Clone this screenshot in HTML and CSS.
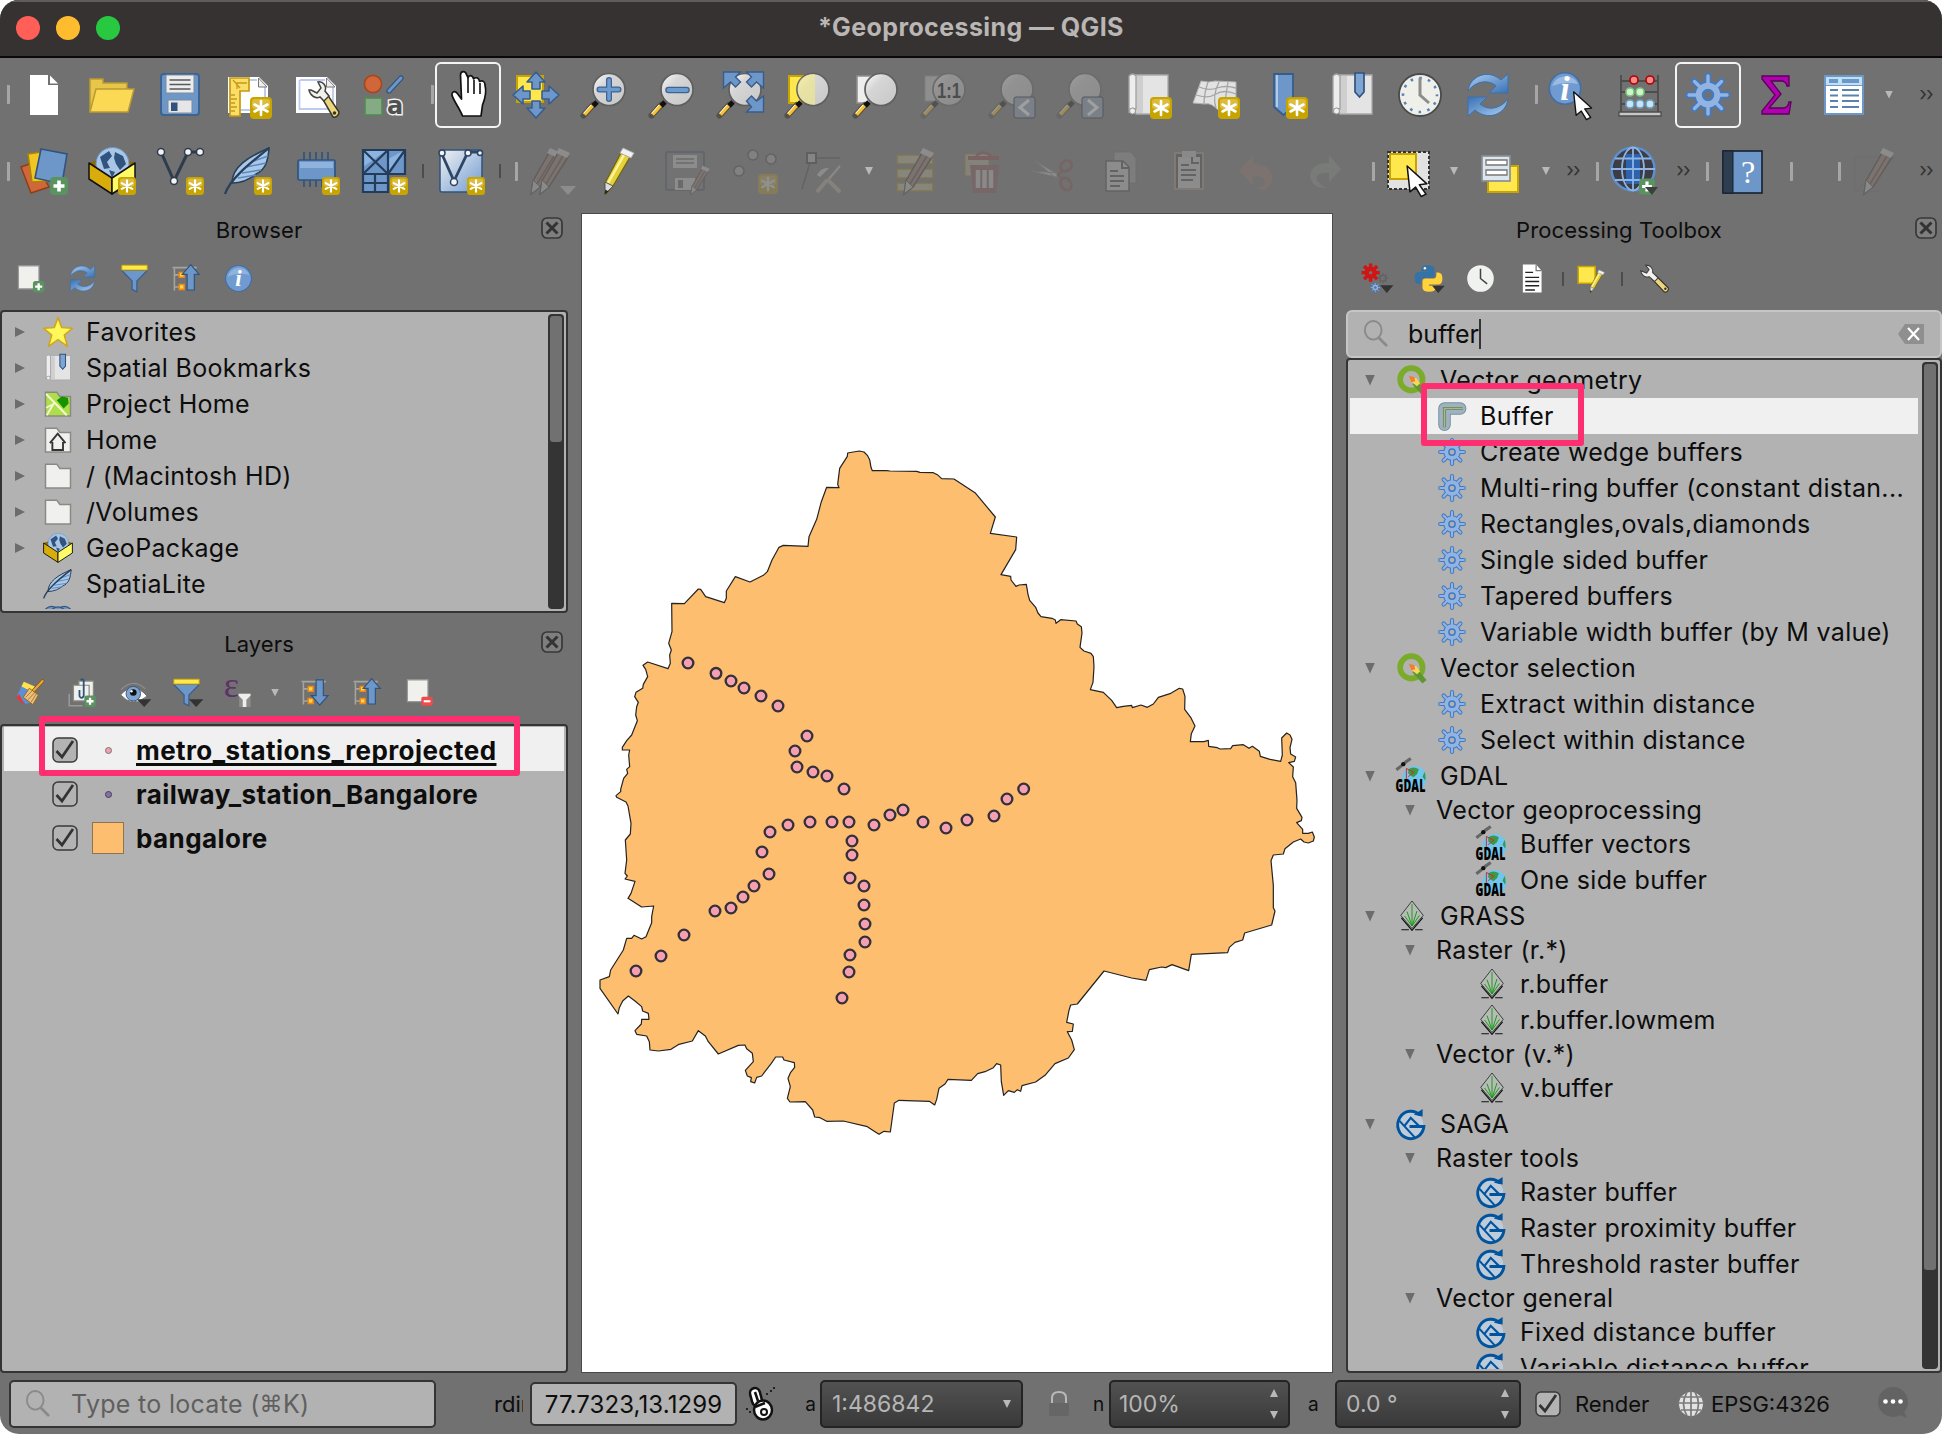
FILE: index.html
```html
<!DOCTYPE html>
<html lang="en">
<head>
<meta charset="utf-8">
<title>*Geoprocessing — QGIS</title>
<link rel="stylesheet" href="styles.css">
</head>
<body>
<svg class="defs" width="0" height="0" aria-hidden="true">
<defs>
  <linearGradient id="lens" x1="0" y1="0" x2="1" y2="1"><stop offset="0" stop-color="#fff"/><stop offset=".35" stop-color="#d6d6d6"/><stop offset="1" stop-color="#c6c6c6"/></linearGradient>
  <linearGradient id="blueg" x1="0" y1="0" x2="1" y2="1"><stop offset="0" stop-color="#a9cdf2"/><stop offset="1" stop-color="#3a72b4"/></linearGradient>
  <linearGradient id="paleg" x1="0" y1="0" x2="1" y2="1"><stop offset="0" stop-color="#f2f2f2"/><stop offset="1" stop-color="#6f9bd0"/></linearGradient>

  <symbol id="badge" viewBox="0 0 22 22"><rect width="22" height="22" rx="4" fill="#c8a400"/><rect x="2" y="2" width="18" height="10" rx="3" fill="#dcbc3c"/><path d="M11 4v14M4.500 7.500l13 7M4.500 14.500l13-7" stroke="#fff" stroke-width="2.600" stroke-linecap="round"/></symbol>
  <symbol id="plus" viewBox="0 0 18 18"><rect width="18" height="18" rx="4" fill="#5a9360"/><path d="M9 3.500v11M3.500 9h11" stroke="#fff" stroke-width="3.600"/></symbol>
  <symbol id="new" viewBox="0 0 48 48"><path d="M10 4h18v10h10v30H10z" fill="#fff"/><path d="M30 4.500l8 8h-8z" fill="#fff"/></symbol>
  <symbol id="open" viewBox="0 0 48 48"><path d="M2 41V8h13v4h24v8" fill="#e8c64a" stroke="#b99b33" stroke-width="1.500"/><path d="M2 41l6-23h38l-6 23z" fill="#fbd954" stroke="#b99b33" stroke-width="1.500"/></symbol>
  <symbol id="save" viewBox="0 0 48 48"><rect x="5" y="3" width="38" height="41" rx="3" fill="#6c97c8" stroke="#3d6391" stroke-width="2"/><path d="M10 4h28v18H10z" fill="#ececec" stroke="#7c8b9c"/><path d="M13.500 9h21M13.500 13.500h21M13.500 18h21" stroke="#55585e" stroke-width="1.600"/><path d="M12 29h24v13H12z" fill="#e6e6e6" stroke="#7c8b9c"/><path d="M15 31.500h6.500v8.500H15z" fill="#31547e"/></symbol>
  <symbol id="layout" viewBox="0 0 48 48"><path d="M4 6h31l9 9v27H4z" fill="#fff"/><path d="M8 9h25M41 16v23H16" fill="none" stroke="#bccbf0" stroke-width="2"/><path d="M34.500 7v9h8.500z" fill="#eee" stroke="#777"/><path d="M6 7h19v13H16v25H6z" fill="#fbdd6b" stroke="#c79a10" stroke-width="1.700"/><path d="M7 24h4M7 28h6M7 32h4M7 36h6M7 40h4M9 9l7 8M13 18v-6h10" stroke="#c79a10" stroke-width="1.300" fill="none"/><use href="#badge" x="26" y="26" width="22" height="22"/></symbol>
  <symbol id="wrench" viewBox="0 0 48 48"><path d="M30 27l5-4L47 41c0 4-4 6-6 5z" fill="#ecd67b" stroke="#37342a" stroke-width="1.500"/><circle cx="42.500" cy="42" r="1.800" fill="#37342a"/><path d="M17 19c1 6 7 9 11 7l4 4 5-5-4-5c2-5-2-10-7-9l3 6-4 5-6-3z" fill="#f1f1ee" stroke="#43423e" stroke-width="1.500"/></symbol>
  <symbol id="manager" viewBox="0 0 48 48"><path d="M4 6h31l9 9v27H4z" fill="#fff"/><path d="M8 9h25M41 16v22H7.500V9" fill="none" stroke="#bccbf0" stroke-width="1.800"/><path d="M34.500 7v9h8.500z" fill="#eee" stroke="#777"/><use href="#wrench"/></symbol>
  <symbol id="style" viewBox="0 0 48 48"><circle cx="13" cy="13" r="8.600" fill="#d0673a" stroke="#a8461c" stroke-width="1.600"/><path d="M29 20L41 7" stroke="#31547e" stroke-width="5.400" stroke-linecap="round"/><path d="M29 20L41 7" stroke="#6c97c8" stroke-width="3" stroke-linecap="round"/><rect x="5" y="27" width="17" height="17" fill="#84ab84" stroke="#548a54" stroke-width="1.600"/><text x="35" y="43" text-anchor="middle" font-family="DejaVu Sans" font-weight="bold" font-size="24" fill="#505050" stroke="#efefef" stroke-width="3" paint-order="stroke">a</text></symbol>
  <symbol id="hand" viewBox="0 0 48 48"><path d="M18.500 45C16 38 9 29 8 24c-.4-3 2-4.500 5-2l4.500 6-1-24c0-4.500 5-4.500 6-.5l1.500 3c2-3 5-2 5.500 1.500 3-2.500 5.500-1 6 2.500 3-1.500 5.500 0 5.500 3.500 2 8 0 14-2.500 20L37 45z" fill="#fff" stroke="#111" stroke-width="1.700" stroke-linejoin="round"/><path d="M24 6v16M30 9v14M36 12v11" stroke="#111" stroke-width="1.600"/></symbol>
  <symbol id="pan" viewBox="0 0 48 48"><rect x="5" y="5" width="26" height="26" fill="#ffe84e" stroke="#c9a400" stroke-width="2"/><g fill="#6c97c8" stroke="#385d8c" stroke-width="1.600" stroke-linejoin="round"><path d="M24 1l9 10h-5v7h-8v-7h-5z"/><path d="M24 47l9-10h-5v-7h-8v7h-5z"/><path d="M1 24l10-9v5h7v8h-7v5z"/><path d="M47 24l-10-9v5h-7v8h7v5z"/></g></symbol>
  <symbol id="lensbase" viewBox="0 0 48 48"><path d="M3.500 44.500L13 34" stroke="#55504a" stroke-width="6" stroke-linecap="round"/><path d="M4.500 43.500L13 34" stroke="#f9c22f" stroke-width="3.600"/><path d="M3.500 42.500L11 34" stroke="#fff" stroke-width="1"/><path d="M13 35l4-4" stroke="#111" stroke-width="5"/><circle cx="29" cy="18.500" r="16" fill="url(#lens)" stroke="#5f5f5f" stroke-width="1.700"/></symbol>
  <symbol id="zin" viewBox="0 0 48 48"><use href="#lensbase"/><path d="M29 9v19M19.500 18.500h19" stroke="#3d6391" stroke-width="6" stroke-linecap="round"/><path d="M29 9v19M19.500 18.500h19" stroke="#6c9bd0" stroke-width="3.500" stroke-linecap="round"/></symbol>
  <symbol id="zout" viewBox="0 0 48 48"><use href="#lensbase"/><path d="M20.500 19h18" stroke="#3d6391" stroke-width="6.500" stroke-linecap="round"/><path d="M20.500 19h18" stroke="#6c9bd0" stroke-width="4" stroke-linecap="round"/></symbol>
  <symbol id="zfull" viewBox="0 0 48 48"><use href="#lensbase"/><g fill="#6c97c8" stroke="#385d8c" stroke-width="1.400"><path d="M7.500 1h17l-5 5 5 5-5 5-5-5-7 6z"/><path d="M47.500 1h-17l5 5-5 5 5 5 5-5 7 6z"/><path d="M47.500 41h-17l5-5-5-6 5-5 5 5 7-5z"/></g></symbol>
  <symbol id="zsel" viewBox="0 0 48 48"><rect x="5" y="5" width="24" height="27" fill="#ffe84e" stroke="#c9a400" stroke-width="2"/><use href="#lensbase"/><path d="M17 8a16 16 0 0 0 0 20q5 5 14 6V3Q22 3 17 8z" fill="#f2e88a" opacity=".65"/></symbol>
  <symbol id="zlay" viewBox="0 0 48 48"><rect x="5" y="5" width="24" height="27" fill="#eee" stroke="#8e8e8a" stroke-width="1.500"/><use href="#lensbase"/></symbol>
  <symbol id="znat" viewBox="0 0 48 48"><rect x="5" y="5" width="24" height="25" fill="#ccc" stroke="#999"/><use href="#lensbase"/><text x="29" y="27" text-anchor="middle" font-family="Liberation Sans" font-weight="bold" font-size="22" textLength="24" lengthAdjust="spacingAndGlyphs" fill="#000">1:1</text></symbol>
  <symbol id="zlast" viewBox="0 0 48 48"><use href="#lensbase"/><rect x="26" y="26" width="21" height="21" rx="2" fill="#8da0b5" stroke="#223"/><path d="M41 29l-9 7.500 9 7.500" fill="none" stroke="#fff" stroke-width="3"/></symbol>
  <symbol id="znext" viewBox="0 0 48 48"><use href="#lensbase"/><rect x="26" y="26" width="21" height="21" rx="2" fill="#8da0b5" stroke="#223"/><path d="M32 29l9 7.500-9 7.500" fill="none" stroke="#fff" stroke-width="3"/></symbol>
  <symbol id="scroll" viewBox="0 0 48 48"><path d="M10 4h34v39H12z" fill="#e4e4e4" stroke="#a9a9a9" stroke-width="1.300"/><path d="M12 5h7v37h-7z" fill="#cfcfcf"/><path d="M5 5q3.500-4 7 0v33q-7-2-7 4z" fill="#ededed" stroke="#a0a0a0" stroke-width="1.300"/><circle cx="8.500" cy="40" r="3" fill="#eee" stroke="#999"/></symbol>
  <symbol id="newmap" viewBox="0 0 48 48"><use href="#scroll"/><use href="#badge" x="26" y="26" width="22" height="22"/></symbol>
  <symbol id="new3d" viewBox="0 0 48 48"><path d="M1 32L9 10q8 2 14 0l21 1v25q-10-2-17 4-8-9-14-7z" fill="#e2e2e2" stroke="#b0b0b0"/><path d="M4 24q12 4 20-1t20 0M7 16q10 4 18 1t19 0M16 11q-4 12-4 22M27 11q-7 14-3 26M36 11q-2 14-4 24" fill="none" stroke="#a5a5a5" stroke-width="1.300"/><use href="#badge" x="26" y="26" width="22" height="22"/></symbol>
  <symbol id="newbm" viewBox="0 0 48 48"><path d="M14 3h19v33l-9.500 8L14 36z" fill="#6c97c8" stroke="#385d8c" stroke-width="1.800"/><path d="M17 4v32" stroke="#c9dcf2" stroke-width="1.500"/><use href="#badge" x="26" y="26" width="22" height="22"/></symbol>
  <symbol id="bm" viewBox="0 0 48 48"><use href="#scroll"/><path d="M27 2h9v19l-4.500 5-4.500-5z" fill="#7fa5d2" stroke="#31547e" stroke-width="1.700"/></symbol>
  <symbol id="clock" viewBox="0 0 48 48"><circle cx="24" cy="24" r="21" fill="#eff0ea" stroke="#4b4b4b" stroke-width="1.800"/><circle cx="24" cy="24" r="17" fill="none" stroke="#5585bb" stroke-width="2.600" stroke-dasharray="2.600 6.300" stroke-dashoffset="1.300"/><path d="M24 7v17l9 8" fill="none" stroke="#8c8c8c" stroke-width="3"/></symbol>
  <symbol id="refresh" viewBox="0 0 48 48"><path id="rf" d="M4 20C6 4 25-2 37 9l7-6v19H25l7-7C24 8 12 10 4 20z" fill="url(#blueg)" stroke="#3c70ac" stroke-width="1"/><use href="#rf" transform="rotate(180 24 24)"/></symbol>
  <symbol id="cursor" viewBox="0 0 24 34"><path d="M1 1l21 19-8 1 7 10-5 2.500-6-10-6 5z" fill="#fff" stroke="#111" stroke-width="1.600" stroke-linejoin="round"/></symbol>
  <symbol id="ident" viewBox="0 0 48 48"><circle cx="17" cy="17.500" r="15.700" fill="#6f9bd0" stroke="#436fa6" stroke-width="1.600"/><path d="M4 15A14 14 0 0 1 30 13Q17 10 4 15z" fill="#9bbbe2"/><text x="17" y="29" text-anchor="middle" font-family="Liberation Serif" font-weight="bold" font-style="italic" font-size="34" fill="#fff">i</text><use href="#cursor" x="21" y="20" width="28" height="29"/></symbol>
  <symbol id="info" viewBox="0 0 48 48"><circle cx="24" cy="24" r="21" fill="#6f9bd0"/><circle cx="24" cy="24" r="21.500" fill="none" stroke="#436fa6" stroke-width="2"/><path d="M6 21A19 19 0 0 1 42 18Q24 13 6 21z" fill="#8fb2de"/><text x="24" y="37" text-anchor="middle" font-family="Liberation Serif" font-weight="bold" font-style="italic" font-size="38" fill="#fff">i</text></symbol>
  <symbol id="abacus" viewBox="0 0 48 48"><path d="M5 4v39M42 4v39M5 10h37M5 21h37M5 33h37" stroke="#4d4d4d" stroke-width="1.800" fill="none"/><path d="M3 41h42v4H3z" fill="#c8c8c8" stroke="#4d4d4d" stroke-width="1.300"/><g stroke-width="1.600"><g fill="#f28c8c" stroke="#b40000"><circle cx="18" cy="9" r="4"/><circle cx="34" cy="9" r="4"/></g><g fill="#d0f2cd" stroke="#7cc67c"><circle cx="14" cy="21" r="4"/><circle cx="24" cy="21" r="4"/></g><g fill="#c8e4f5" stroke="#6ea3c4"><circle cx="14" cy="33" r="4"/><circle cx="24" cy="33" r="4"/><circle cx="34" cy="33" r="4"/></g></g></symbol>
  <symbol id="gear" viewBox="0 0 48 48"><path d="M24 5v38M5 24h38M10.500 10.500l27 27M10.500 37.500l27-27" stroke="#3f7bc6" stroke-width="6.600" stroke-linecap="round"/><circle cx="24" cy="24" r="14" fill="#3f7bc6"/><path d="M24 5v38M5 24h38M10.500 10.500l27 27M10.500 37.500l27-27" stroke="#93b3e0" stroke-width="3.400" stroke-linecap="round"/><circle cx="24" cy="24" r="12.300" fill="#93b3e0"/><circle cx="24" cy="24" r="5" fill="var(--hole)" stroke="#3f7bc6" stroke-width="2.400"/></symbol>
  <symbol id="sigma" viewBox="0 0 48 48"><path d="M10 5h27v10h-2q-1-5-6-5H19l10 13-12 14h14q5 0 6-6h2l-2 12H10v-3l13-16L10 8z" fill="#b000b0" stroke="#5a005a" stroke-width="1.300"/></symbol>
  <symbol id="table" viewBox="0 0 48 48"><rect x="5" y="5" width="38" height="38" fill="#fff" stroke="#6c97c8" stroke-width="2"/><path d="M6 6h36v8H6z" fill="#bfe0f0"/><path d="M9 10h9M22 10h17" stroke="#6c97c8" stroke-width="4"/><path d="M6 14.500h36" stroke="#6c97c8"/><path d="M10 19h8M22 19h17M10 24.500h8M22 24.500h17M10 30h8M22 30h17M10 36h8M22 36h17" stroke="#5a82b0" stroke-width="2"/></symbol>

  <symbol id="addlayer" viewBox="0 0 48 48"><path d="M1 20l14-5 14 25-18 6z" fill="#d0673a" stroke="#8f3e17" stroke-width="1.500"/><path d="M8 7l20-3 4 30-20 1z" fill="#f0c622" stroke="#a98500" stroke-width="1.500"/><path d="M21 2l26 5-5 30-27-6z" fill="#6c97c8" stroke="#31547e" stroke-width="1.600"/><use href="#plus" x="30" y="30" width="18" height="18"/></symbol>
  <symbol id="box" viewBox="0 0 48 48"><path d="M1 16l23-8 23 8-23 14z" fill="#8a6a00"/><circle cx="24.500" cy="17" r="16.500" fill="#a9c6e6" stroke="#6c97c8"/><path d="M12 10l9-6 3 5-5 6 3 6-6 1zM27 5l8 4 3 8-6 6-4-6-2-6zM21 23l6 2-3 6z" fill="#31547e"/><path d="M1 16l23 15v16L1 32z" fill="#d8ad09" stroke="#111" stroke-width="1.500" stroke-linejoin="round"/><path d="M47 16L24 31v16l23-15z" fill="#fffa66" stroke="#111" stroke-width="1.500" stroke-linejoin="round"/></symbol>
  <symbol id="newgpkg" viewBox="0 0 48 48"><use href="#box"/><use href="#badge" x="30" y="30" width="18" height="18"/></symbol>
  <symbol id="shp" viewBox="0 0 48 48"><path d="M5 5l13 29L32 5h12" fill="none" stroke="#2d3b4d" stroke-width="3"/><g fill="#f4f4f4" stroke="#2d3b4d" stroke-width="1.500"><circle cx="5" cy="5" r="3.500"/><circle cx="18" cy="34" r="3.500"/><circle cx="32" cy="5" r="3.500"/><circle cx="44" cy="5" r="3.500"/></g><use href="#badge" x="30" y="30" width="18" height="18"/></symbol>
  <symbol id="feather" viewBox="0 0 48 48"><path d="M8 36C8 20 24 10 45 1c-1 14-4 22-13 26-6 5-14 9-24 9z" fill="#a9c9ea" stroke="#2a3f59" stroke-width="1.600"/><path d="M14 31l18-3M18 26l19-3M22 20l20-4M27 15l17-6" stroke="#5d89bd" stroke-width="1.500"/><path d="M1 47C6 32 24 18 45 1" fill="none" stroke="#2a3f59" stroke-width="2.300"/></symbol>
  <symbol id="newsl" viewBox="0 0 48 48"><use href="#feather"/><use href="#badge" x="30" y="30" width="18" height="18"/></symbol>
  <symbol id="mem" viewBox="0 0 48 48"><path d="M12 5v35M18 5v35M24 5v35M30 5v35M36 5v35" stroke="#31547e" stroke-width="1.700"/><rect x="6" y="13" width="37" height="20" rx="1.500" fill="#6c97c8" stroke="#31547e" stroke-width="1.700"/><path d="M8 15h33v6H8z" fill="#8fb3dc"/><use href="#badge" x="30" y="30" width="18" height="18"/></symbol>
  <symbol id="virt" viewBox="0 0 48 48"><path d="M3 3h42v24H28v18H3z" fill="#6c97c8"/><path d="M3 3h24L3 20zM45 3L28 12v15z" fill="#8db4e0"/><path d="M3 3h42v24H3zM28 3v42H3V3M3 3l25 24M28 3L3 27M45 3L28 27M15 27v18M3 36h25" fill="none" stroke="#233c5a" stroke-width="2.200"/><use href="#badge" x="30" y="30" width="18" height="18"/></symbol>
  <symbol id="mesh" viewBox="0 0 48 48"><rect x="3" y="3" width="42" height="42" rx="2" fill="url(#paleg)" stroke="#31547e" stroke-width="1.500"/><path d="M4 5l13 29L31 5h13" fill="none" stroke="#2d4566" stroke-width="2.800"/><g fill="#f4f4f4" stroke="#2d4566" stroke-width="1.500"><circle cx="5" cy="6" r="3"/><circle cx="17" cy="35" r="3.500"/><circle cx="31" cy="6" r="3"/><circle cx="43" cy="6" r="2.500"/></g><use href="#badge" x="30" y="30" width="18" height="18"/></symbol>
  <symbol id="pencil" viewBox="0 0 48 48"><path d="M25 6l9 4-17 29-7 8-1-11z" fill="#e6d238" stroke="#6e6410" stroke-width="1.200"/><path d="M28 8L12 36" stroke="#fff59a" stroke-width="2.500"/><path d="M9 35l8 4-8 8z" fill="#ddd" stroke="#555"/><path d="M27 1l11 5-3 5-11-5z" fill="#f1f1f1" stroke="#aaa"/><path d="M8.500 47.500l1-5 3 2z" fill="#222"/></symbol>
  <symbol id="dpencil" viewBox="0 0 48 48"><path d="M29 6l10 4-19 30-9 7 2-13z" fill="#a07c70" stroke="#3a1b10" stroke-width="1.500"/><path d="M34 9L17 37" stroke="#5a3020" stroke-width="1.500"/><path d="M13 33l7 7-9 7z" fill="#ddd" stroke="#333"/><path d="M30 1l11 5-3 5-11-5z" fill="#eee"/></symbol>
  <symbol id="edits" viewBox="0 0 48 48"><use href="#dpencil" x="-8"/><use href="#dpencil" x="1"/><path d="M32 39h16l-8 9z" fill="#eee"/></symbol>
  <symbol id="esave" viewBox="0 0 48 48"><rect x="2" y="5" width="38" height="38" rx="2" fill="#77797d" stroke="#345" stroke-width="2"/><path d="M9 8h24v13H9z" fill="#eee"/><path d="M12 12h18M12 16h18" stroke="#555" stroke-width="1.500"/><path d="M11 31h20v12H11z" fill="#eee"/><path d="M14 33h5v8h-5z" fill="#555"/><use href="#dpencil" x="20" y="18" width="30" height="30"/></symbol>
  <symbol id="addpt" viewBox="0 0 48 48"><g fill="#bbb" stroke="#333" stroke-width="1.500"><circle cx="7" cy="24" r="5"/><circle cx="21" cy="8" r="5"/><circle cx="39" cy="12" r="5"/></g><use href="#badge" x="26" y="27" width="20" height="20"/></symbol>
  <symbol id="vertex" viewBox="0 0 48 48"><path d="M12 11h28M11 12L2 42" stroke="#333" stroke-width="1.500"/><rect x="7" y="6" width="9" height="10" fill="#ccc" stroke="#222" stroke-width="2"/><path d="M17 28q4-8 12-7l-9 9z" fill="#eee"/><path d="M40 19L28 33" stroke="#ddd" stroke-width="2"/><path d="M27 32l13 13M17 45l10-12" stroke="#cba" stroke-width="4"/></symbol>
  <symbol id="multi" viewBox="0 0 48 48"><path d="M4 8h36v9H4zM4 22h36v9H4zM4 36h36v8H4z" fill="#d8d0a0" stroke="#a98500" stroke-width="1.500"/><use href="#dpencil"/></symbol>
  <symbol id="trash" viewBox="0 0 48 48"><path d="M4 7h24v22H4z" fill="#c8c09c" stroke="#a98500"/><path d="M7 11h31" stroke="#a03636" stroke-width="4"/><path d="M15 9q7-7 15 0" fill="none" stroke="#a03636" stroke-width="2.500"/><path d="M9 18h29l-3 28H12z" fill="#8c4646"/><path d="M17 23v18M23.500 23v18M30 23v18" stroke="#ddd" stroke-width="4.500"/></symbol>
  <symbol id="cut" viewBox="0 0 48 48"><path d="M2 24l28 2-3 4zM6 14l24 14-3 3z" fill="#eee" stroke="#888"/><g fill="none" stroke="#8a3c3c" stroke-width="2.600"><ellipse cx="37" cy="19" rx="6" ry="5" transform="rotate(-40 37 19)"/><ellipse cx="37" cy="37" rx="5" ry="6.500" transform="rotate(-30 37 37)"/></g><path d="M28 27l6 5M28 28l5-4" stroke="#8a3c3c" stroke-width="2"/></symbol>
  <symbol id="copy" viewBox="0 0 48 48"><path d="M17 5h17l5 6v25H17z" fill="#aaa" stroke="#666"/><path d="M9 14h17l6 6v24H9z" fill="#eee" stroke="#333" stroke-width="1.500"/><path d="M13 24h8M13 29h14M13 34h14M13 39h10M25 14v7h7" fill="none" stroke="#333" stroke-width="2"/></symbol>
  <symbol id="paste" viewBox="0 0 48 48"><path d="M10 6h28v36H10z" fill="#333" stroke="#b59a80" stroke-width="2"/><path d="M13 10h22v31H13z" fill="#eee"/><path d="M17 4h14v7H17z" fill="#ddd"/><path d="M16 18h8M16 23h15M16 28h15M16 33h12M27 10v6h7" fill="none" stroke="#333" stroke-width="2"/></symbol>
  <symbol id="undo" viewBox="0 0 48 48"><path d="M6 24L20 8v9c16-1 22 10 18 20q-6 9-16 4 12-1 9-9-3-4-11-2v9z" fill="#a37c6c"/></symbol>
  <symbol id="redo" viewBox="0 0 48 48"><path d="M40 22L28 8v8C14 15 7 24 10 33q4 9 15 8-13-8-8-13 4-3 11-2v9z" fill="#93a093"/></symbol>
  <symbol id="select" viewBox="0 0 48 48"><rect x="3" y="5" width="41" height="37" fill="#e2e2e2" stroke="#333" stroke-width="2" stroke-dasharray="3 2"/><rect x="5" y="7" width="26" height="25" fill="#ffe84e" stroke="#c9a400" stroke-width="2"/><use href="#cursor" x="17" y="18" width="31" height="32"/></symbol>
  <symbol id="seltab" viewBox="0 0 48 48"><rect x="11" y="19" width="30" height="26" fill="#ffe84e" stroke="#c9a400" stroke-width="2"/><rect x="5" y="9" width="28" height="25" fill="#dce6ee" stroke="#8b8f93" stroke-width="1.700"/><path d="M9 13h21v5H9zM9 23h21v5H9z" fill="#fff" stroke="#777" stroke-width="1.300"/></symbol>
  <symbol id="globe" viewBox="0 0 48 48"><circle cx="24" cy="22" r="21.500" fill="#3c3c42" stroke="#5b8fd0" stroke-width="2.400"/><path d="M17 7h14v30H17z" fill="#2d63ad"/><path d="M2 22h44M6 11.500h36M6 33h36M24 1v42" stroke="#8db4e6" stroke-width="1.800" fill="none"/><ellipse cx="24" cy="22" rx="11" ry="21.500" fill="none" stroke="#8db4e6" stroke-width="1.800"/><use href="#plus" x="30" y="31" width="16" height="17"/><path d="M36 40h13l-6 8z" fill="#3b403b"/></symbol>
  <symbol id="help" viewBox="0 0 48 48"><rect x="4" y="4" width="39" height="42" fill="#6c97c8" stroke="#15202e" stroke-width="1.600"/><path d="M4 4h10v42H4z" fill="#2c3e50" stroke="#15202e"/><text x="29" y="36" text-anchor="middle" font-family="Liberation Serif" font-size="32" fill="#fff">?</text></symbol>
  <symbol id="ghost" viewBox="0 0 48 48"><path d="M4 10h40M4 44h26M4 10v34M4 44l40-34" stroke="#555" fill="none" opacity=".5"/><use href="#dpencil" x="2"/></symbol>

  <symbol id="addsel" viewBox="0 0 48 48"><path d="M4 3h34v38H4z" fill="#f0f0ec" stroke="#999" stroke-width="2"/><use href="#plus" x="28" y="28" width="19" height="19"/></symbol>
  <symbol id="rmlay" viewBox="0 0 48 48"><path d="M4 3h34v36H4z" fill="#f0f0ec" stroke="#999" stroke-width="2"/><rect x="27" y="31" width="19" height="15" rx="3" fill="#ee4b4b"/><path d="M31 38.500h11" stroke="#fff" stroke-width="3.500"/></symbol>
  <symbol id="filter" viewBox="0 0 48 48"><path d="M4 10h40v2L28 28v18l-8-4V28L4 12z" fill="#6c97c8" stroke="#385d8c" stroke-width="2"/><path d="M3 2h42v8H3z" fill="#ffe84e" stroke="#c9a400" stroke-width="1.500"/></symbol>
  <symbol id="dd" viewBox="0 0 48 48"><path d="M28 35h24L40 48z" fill="#333"/></symbol>
  <symbol id="collapse" viewBox="0 0 48 48"><path d="M1 6h40M4 8v36M4 18h8M4 38h8" stroke="#a6a6a0" stroke-width="2.500" fill="none"/><path d="M12 14h8v8h-8zM12 34h8v8h-8z" fill="#ffd35c" stroke="#f08a10" stroke-width="2.500"/><path d="M31 1l14 16h-8v26H25V17h-8z" fill="#6c97c8" stroke="#31547e" stroke-width="2"/></symbol>
  <symbol id="expand" viewBox="0 0 48 48"><path d="M1 6h40M4 8v36M4 18h8M4 38h8" stroke="#a6a6a0" stroke-width="2.500" fill="none"/><path d="M12 14h8v8h-8zM12 34h8v8h-8z" fill="#ffd35c" stroke="#f08a10" stroke-width="2.500"/><path d="M31 45l14-16h-8V3H25v26h-8z" fill="#6c97c8" stroke="#31547e" stroke-width="2"/></symbol>
  <symbol id="brush" viewBox="0 0 48 48"><path d="M2 28L13 6l18 8-5 26-10 3z" fill="#5c8fd6"/><path d="M13 6l18 8-3 9L9 14z" fill="#ffe14d"/><path d="M5 26l9 18L1 34z" fill="#e33"/><path d="M44 5L29 21" stroke="#8a5a12" stroke-width="6" stroke-linecap="round"/><path d="M44 5L29 21" stroke="#e8a93c" stroke-width="3.500" stroke-linecap="round"/><path d="M22 17l15 11-9 16-16-12z" fill="#e9c07c" stroke="#96641d" stroke-width="1.500"/><path d="M16 32l12-12M20 36l12-13M25 40l9-14" stroke="#96641d" stroke-width="1.200"/></symbol>
  <symbol id="addgrp" viewBox="0 0 48 48"><path d="M2 26v20h22" fill="none" stroke="#999" stroke-width="2.500"/><path d="M18 5h24v26H18z" fill="#f0f0ec" stroke="#8a8a85" stroke-width="2"/><path d="M9 12h26v26H9z" fill="#f0f0ec" stroke="#8a8a85" stroke-width="2"/><path d="M19 20v10q3 6 7 0V4q-2-4-5 0" fill="none" stroke="#31547e" stroke-width="3"/><use href="#plus" x="27" y="29" width="19" height="19"/></symbol>
  <symbol id="eye" viewBox="0 0 48 48"><path d="M1 28q21-24 44 2-24 20-44-2z" fill="#fff" stroke="#666" stroke-width="1.500"/><circle cx="22" cy="26" r="12" fill="#7fa5d2" stroke="#31547e" stroke-width="1.500"/><circle cx="22" cy="24" r="5.500" fill="#111"/><circle cx="19" cy="22" r="2" fill="#fff"/><path d="M2 19q20-20 40-1" fill="none" stroke="#8e8e8e" stroke-width="2"/><use href="#dd"/></symbol>
  <symbol id="eps" viewBox="0 0 48 48"><text x="12" y="31" text-anchor="middle" font-family="Liberation Serif" font-size="60" fill="#5f3168">ε</text><path d="M25 26h19v22H25z" fill="#8c8c88"/><path d="M24 26h20v3l-7 7v12h-6V36l-7-7z" fill="#eee"/></symbol>
  <symbol id="star" viewBox="0 0 48 48"><path d="M24 1l6 16 17 1-13 11 5 18-15-11-15 11 5-18L1 18l17-1z" fill="#fff85a" stroke="#d2a512" stroke-width="2.400" stroke-linejoin="round"/></symbol>
  <symbol id="folder" viewBox="0 0 48 48"><path d="M4 5h18l5 7h17v31H4z" fill="#f0f0ee" stroke="#8a8a84" stroke-width="2.400"/></symbol>
  <symbol id="home" viewBox="0 0 48 48"><use href="#folder"/><path d="M15 27v13h17V27M11 29l12.500-15L36 29" fill="none" stroke="#333" stroke-width="3"/></symbol>
  <symbol id="proj" viewBox="0 0 48 48"><path d="M4 5h18l5 7h17v31H4z" fill="#aede4a" stroke="#8a8a84" stroke-width="2.400"/><path d="M5 8l33 34M5 30l12-6M18 22L6 42" stroke="#f4f7d0" stroke-width="3" fill="none"/><path d="M22 18l8-6 10 2 1 9-8 8z" fill="#159400"/></symbol>
  <symbol id="elephant" viewBox="0 0 48 48"><circle cx="14" cy="15" r="13" fill="#6c97c8" stroke="#31547e" stroke-width="2"/><circle cx="34" cy="15" r="13" fill="#6c97c8" stroke="#31547e" stroke-width="2"/><circle cx="24" cy="16" r="13" fill="#6c97c8" stroke="#31547e" stroke-width="2"/></symbol>
  <symbol id="close" viewBox="0 0 22 22"><rect x="1" y="1" width="20" height="20" rx="5" fill="#7e7e7e" stroke="#383838" stroke-width="1.700"/><path d="M5.500 5.500l11 11M16.500 5.500l-11 11" stroke="#333" stroke-width="3"/></symbol>
  <symbol id="tick" viewBox="0 0 26 26"><rect x="1" y="1" width="24" height="24" rx="5" fill="#b3b3b3" stroke="#3a3a3a" stroke-width="1.500"/><path d="M4.500 14l5.500 6L21 4" fill="none" stroke="#333" stroke-width="2.700"/></symbol>

  <symbol id="models" viewBox="0 0 48 48"><g transform="translate(-3 -3) scale(.72)"><path d="M24 3v42M3 24h42M9 9l30 30M9 39L39 9" stroke="#d01515" stroke-width="8"/><circle cx="24" cy="24" r="14" fill="#d01515"/><circle cx="24" cy="24" r="4" fill="#717171"/></g><g transform="translate(25 14) scale(.4)" opacity=".5"><path d="M24 3v42M3 24h42M9 9l30 30M9 39L39 9" stroke="#555" stroke-width="6"/><circle cx="24" cy="24" r="12" fill="#717171" stroke="#555" stroke-width="5"/></g><use href="#gear" x="13" y="30" width="18" height="18"/><path d="M30 35h22L41 48z" fill="#333"/></symbol>
  <symbol id="python" viewBox="0 0 48 48"><path d="M12 12V8q0-6 11-6t11 6v10q0 5-5 5H17q-6 0-6 6v4H8Q1 33 1 23t7-10h15v-1z" fill="#3572a5"/><path d="M36 36v3q0 7-11 7t-11-7V29q0-5 5-5h12q6 0 6-6v-4h3q7 0 7 10t-7 10H25v2z" fill="#ffd43b"/><circle cx="18" cy="7" r="2" fill="#fff"/><path d="M30 36h21L40 48z" fill="#333"/></symbol>
  <symbol id="hist" viewBox="0 0 48 48"><circle cx="24" cy="24" r="22" fill="#f0f2ef"/><path d="M24 8v16l11 9" fill="none" stroke="#444" stroke-width="2.500"/></symbol>
  <symbol id="log" viewBox="0 0 48 48"><path d="M8 1h22l9 10v36H8z" fill="#fff"/><path d="M30 1v10h9" fill="none" stroke="#777" stroke-width="2"/><path d="M12 14h13M12 22h23M12 29h23M12 36h23M12 43h16" stroke="#222" stroke-width="2.200"/></symbol>
  <symbol id="inplace" viewBox="0 0 48 48"><path d="M2 4h28v28H2z" fill="#ffe84e" stroke="#c9a400" stroke-width="2.500"/><use href="#pencil" x="13" y="9" width="42" height="39"/></symbol>
  <symbol id="bigwrench" viewBox="0 0 48 48"><path d="M20 25l7-5 20 20c1 5-4 8-7 6z" fill="#ecd67b" stroke="#37342a" stroke-width="2"/><circle cx="42" cy="41" r="2" fill="#333"/><path d="M1 11c1 8 8 12 14 10l9 8 6-6-9-9C22 7 17 1 9 2l6 7-4 6z" fill="#f1f1ee" stroke="#43423e" stroke-width="1.800"/></symbol>
  <symbol id="qgis" viewBox="0 0 48 48"><circle cx="23" cy="23" r="18" fill="none" stroke="#7aab2b" stroke-width="9"/><path d="M28 28l16 18" stroke="#5d9732" stroke-width="9"/><path d="M21 18l10 3 6 8-5 5-10-8z" fill="#f9d65c"/><path d="M19 17l9 2 1 7-6 2z" fill="#f08030"/></symbol>
  <symbol id="bufferic" viewBox="0 0 48 48"><path d="M12 38V12h25" fill="none" stroke="#71909e" stroke-width="20" stroke-linecap="round" stroke-linejoin="round"/><path d="M12 38V12h25" fill="none" stroke="#9fb2bf" stroke-width="17" stroke-linecap="round" stroke-linejoin="round"/><path d="M12 42V12h29" fill="none" stroke="#67805f" stroke-width="5"/><path d="M12 42V12h29" fill="none" stroke="#a7b78f" stroke-width="2.500"/></symbol>
  <symbol id="gdal" viewBox="0 0 48 48"><circle cx="28" cy="27" r="19" fill="#6fc6ee"/><path d="M18 13q8-5 17 0l-3 8-6 5-8-6zM44 17q3 8 1 14l-4-6z" fill="#3b9a4a"/><path d="M15 12v20M15 12l12 6-9 7" fill="none" stroke="#d22" stroke-width="1.500"/><path d="M-1 14l9-7M12 3l10-7" stroke="#666" stroke-width="5"/><circle cx="10" cy="5" r="3.500" fill="#111"/><text x="21.500" y="50" text-anchor="middle" font-family="Open Sans" font-weight="800" font-size="27" textLength="48" lengthAdjust="spacingAndGlyphs" fill="#000">GDAL</text></symbol>
  <symbol id="grass" viewBox="0 0 48 48"><path d="M24 0l18 23-18 21L6 23z" fill="#b6bbb6" stroke="#222" stroke-width="1.300"/><path d="M7 27l17 20 17-20" fill="none" stroke="#111" stroke-width="2"/><path d="M24 40V5M24 40L16 17M24 40l8-24M24 40L12 24M24 40l12-17" stroke="#149a14" stroke-width="1.500"/><path d="M7 46h12M29 46h12" stroke="#111" stroke-width="1.800"/></symbol>
  <symbol id="saga" viewBox="0 0 48 48"><circle cx="22" cy="25" r="20" fill="#c3d6ea" opacity=".7"/><path d="M37 10A21 22 0 1 0 43 28H20" fill="none" stroke="#00549f" stroke-width="4.600"/><path d="M27 9l14 3V0z" fill="#00549f"/><path d="M4 19l24 26M12 27l10-13 15 15" fill="none" stroke="#00549f" stroke-width="3.400"/></symbol>
  <symbol id="search" viewBox="0 0 28 32"><ellipse cx="11" cy="12" rx="9" ry="10" fill="none" stroke="#8a8a8a" stroke-width="2"/><path d="M17 20l8 8" stroke="#8a8a8a" stroke-width="3" stroke-linecap="round"/></symbol>
  <symbol id="mouse" viewBox="0 0 30 34"><rect x="5" y="1" width="10" height="18" rx="5" transform="rotate(-15 10 10)" fill="#fff" stroke="#111" stroke-width="2.500"/><ellipse cx="17" cy="23" rx="9" ry="9.500" fill="#fff" stroke="#111" stroke-width="2.500"/><circle cx="18" cy="25" r="3" fill="#fff" stroke="#111" stroke-width="2"/><path d="M9 5l3 9M9 20l10-4" stroke="#111" stroke-width="2.500"/><path d="M20 7h2M24 4h2M27 1h2M0 22h2M3 25h2" stroke="#222" stroke-width="2"/></symbol>
  <symbol id="lock" viewBox="0 0 24 28"><path d="M5 14V8q0-6 7-6t7 6v6" fill="none" stroke="#b9b9b9" stroke-width="2"/><rect x="2" y="13" width="20" height="13" rx="2" fill="#666"/></symbol>
  <symbol id="crs" viewBox="0 0 30 30"><circle cx="15" cy="15" r="12" fill="#e3e3e3"/><path d="M1 14h28M5 8h20M5 21h20M15 1v28M11 3q-7 12 0 24M19 3q7 12 0 24" fill="none" stroke="#7a7a7a" stroke-width="1.700"/></symbol>
  <symbol id="bubble" viewBox="0 0 34 34"><circle cx="16" cy="15" r="15" fill="#636363"/><path d="M20 27l10 4-4-9z" fill="#636363"/><g fill="#fff"><circle cx="8.500" cy="14.500" r="2.300"/><circle cx="16" cy="14.500" r="2.300"/><circle cx="23.500" cy="14.500" r="2.300"/></g></symbol>
</defs>
</svg>

<div class="window">
  <header class="titlebar">
    <div class="lights"><i class="red"></i><i class="amber"></i><i class="green"></i></div>
    <h1>*Geoprocessing — QGIS</h1>
  </header>

  <div class="toolbar first">
    <i class="grip w10"></i>
    <span class="tb"><svg><use href="#new"/></svg></span>
    <span class="tb"><svg><use href="#open"/></svg></span>
    <span class="tb"><svg><use href="#save"/></svg></span>
    <span class="tb"><svg><use href="#layout"/></svg></span>
    <span class="tb"><svg><use href="#manager"/></svg></span>
    <span class="tb"><svg><use href="#style"/></svg></span>
    <i class="grip w16"></i>
    <span class="tb on"><svg><use href="#hand"/></svg></span>
    <span class="tb"><svg><use href="#pan"/></svg></span>
    <span class="tb"><svg><use href="#zin"/></svg></span>
    <span class="tb"><svg><use href="#zout"/></svg></span>
    <span class="tb"><svg><use href="#zfull"/></svg></span>
    <span class="tb"><svg><use href="#zsel"/></svg></span>
    <span class="tb"><svg><use href="#zlay"/></svg></span>
    <span class="tb dim"><svg><use href="#znat"/></svg></span>
    <span class="tb dim"><svg><use href="#zlast"/></svg></span>
    <span class="tb dim"><svg><use href="#znext"/></svg></span>
    <span class="tb"><svg><use href="#newmap"/></svg></span>
    <span class="tb"><svg><use href="#new3d"/></svg></span>
    <span class="tb"><svg><use href="#newbm"/></svg></span>
    <span class="tb"><svg><use href="#bm"/></svg></span>
    <span class="tb"><svg><use href="#clock"/></svg></span>
    <span class="tb"><svg><use href="#refresh"/></svg></span>
    <i class="grip w16"></i>
    <span class="tb"><svg><use href="#ident"/></svg></span>
    <span class="tb"><svg><use href="#abacus"/></svg></span>
    <span class="tb on"><svg><use href="#gear"/></svg></span>
    <span class="tb"><svg><use href="#sigma"/></svg></span>
    <span class="tb"><svg><use href="#table"/></svg></span>
    <i class="drop"></i>
    <span class="more last">››</span>
  </div>

  <div class="toolbar second">
    <i class="grip w10"></i>
    <span class="tb"><svg><use href="#addlayer"/></svg></span>
    <span class="tb"><svg><use href="#newgpkg"/></svg></span>
    <span class="tb"><svg><use href="#shp"/></svg></span>
    <span class="tb"><svg><use href="#newsl"/></svg></span>
    <span class="tb"><svg><use href="#mem"/></svg></span>
    <span class="tb"><svg><use href="#virt"/></svg></span>
    <i class="sep"></i>
    <span class="tb"><svg><use href="#mesh"/></svg></span>
    <i class="sep"></i>
    <i class="grip w14"></i>
    <span class="tb faint"><svg><use href="#edits"/></svg></span>
    <span class="tb"><svg><use href="#pencil"/></svg></span>
    <span class="tb faint"><svg><use href="#esave"/></svg></span>
    <span class="tb faint"><svg><use href="#addpt"/></svg></span>
    <span class="tb faint"><svg><use href="#vertex"/></svg></span>
    <i class="drop gap3"></i>
    <span class="tb faint"><svg><use href="#multi"/></svg></span>
    <span class="tb faint"><svg><use href="#trash"/></svg></span>
    <span class="tb faint"><svg><use href="#cut"/></svg></span>
    <span class="tb faint"><svg><use href="#copy"/></svg></span>
    <span class="tb faint"><svg><use href="#paste"/></svg></span>
    <span class="tb faint"><svg><use href="#undo"/></svg></span>
    <span class="tb faint"><svg><use href="#redo"/></svg></span>
    <i class="grip w16"></i>
    <span class="tb"><svg><use href="#select"/></svg></span>
    <i class="drop gap2"></i>
    <span class="tb"><svg><use href="#seltab"/></svg></span>
    <i class="drop"></i>
    <span class="more">››</span>
    <i class="grip w10"></i>
    <span class="tb"><svg><use href="#globe"/></svg></span>
    <span class="more">››</span>
    <i class="grip w10"></i>
    <span class="tb"><svg><use href="#help"/></svg></span>
    <i class="grip w16"></i>
    <i class="grip w48"></i>
    <span class="tb faint"><svg><use href="#ghost"/></svg></span>
    <span class="more last">››</span>
  </div>

  <main class="work">
    <div class="left">
      <section class="panel browser">
        <div class="head"><h2>Browser</h2><svg class="x"><use href="#close"/></svg></div>
        <div class="tools">
          <span><svg><use href="#addsel"/></svg></span><span><svg><use href="#refresh"/></svg></span><span><svg><use href="#filter"/></svg></span><span><svg><use href="#collapse"/></svg></span><span><svg><use href="#info"/></svg></span>
        </div>
        <div class="view">
          <ul class="tree files">
            <li><i class="shut"></i><svg><use href="#star"/></svg>Favorites</li>
            <li><i class="shut"></i><svg><use href="#bm"/></svg>Spatial Bookmarks</li>
            <li><i class="shut"></i><svg><use href="#proj"/></svg>Project Home</li>
            <li><i class="shut"></i><svg><use href="#home"/></svg>Home</li>
            <li><i class="shut"></i><svg><use href="#folder"/></svg>/ (Macintosh HD)</li>
            <li><i class="shut"></i><svg><use href="#folder"/></svg>/Volumes</li>
            <li><i class="shut"></i><svg><use href="#box"/></svg>GeoPackage</li>
            <li class="leaf"><svg><use href="#feather"/></svg>SpatiaLite</li>
            <li class="leaf"><svg><use href="#elephant"/></svg>PostGIS</li>
          </ul>
          <div class="scroll"><div class="thumb short"></div></div>
        </div>
      </section>
      <section class="panel layers">
        <div class="head"><h2>Layers</h2><svg class="x"><use href="#close"/></svg></div>
        <div class="tools">
          <span><svg><use href="#brush"/></svg></span><span><svg><use href="#addgrp"/></svg></span><span><svg><use href="#eye"/></svg></span><span><svg><use href="#filter"/><use href="#dd"/></svg></span><span><svg><use href="#eps"/></svg></span><i class="drop"></i><span><svg><use href="#expand"/></svg></span><span><svg><use href="#collapse"/></svg></span><span><svg><use href="#rmlay"/></svg></span>
        </div>
        <div class="view list">
          <div class="layer chosen"><svg class="check"><use href="#tick"/></svg><i class="sym"><b class="dot pink"></b></i><span>metro_stations_reprojected</span></div>
          <div class="layer"><svg class="check"><use href="#tick"/></svg><i class="sym"><b class="dot violet"></b></i><span>railway_station_Bangalore</span></div>
          <div class="layer"><svg class="check"><use href="#tick"/></svg><i class="sym fill"></i><span>bangalore</span></div>
          <div class="mark layermark"></div>
        </div>
      </section>
    </div>

    <section class="map">
      <svg viewBox="6 -648 2250 3474">
        <path class="district" d="M803 69L820 66 838 63 852 66 862 76 869 89 873 112 877 122 920 122 930 123 1010 124 1020 127 1060 128 1072 134 1085 146 1122 147 1185 188 1246 261 1231 310 1310 321 1307 359 1263 434 1292 439 1293 450 1308 469 1317 465 1339 463 1344 493 1349 511 1367 532 1374 549 1383 560 1416 565 1426 570 1428 580 1442 569 1488 573 1492 582 1504 590 1506 609 1500 652 1512 663 1533 670 1540 680 1542 710 1539 757 1531 779 1570 787 1595 811 1610 833 1630 829 1655 826 1657 833 1683 825 1702 832 1720 822 1735 802 1770 791 1798 775 1808 777 1815 799 1814 838 1832 862 1845 888 1834 911 1831 935 1872 935 1885 931 1886 949 1912 953 1920 957 1952 956 1958 947 1990 944 2007 955 2017 949 2038 964 2041 979 2070 988 2102 994 2107 975 2105 924 2120 909 2130 915 2136 928 2130 953 2132 972 2147 981 2143 994 2126 998 2140 1011 2138 1040 2147 1058 2151 1111 2150 1135 2166 1162 2164 1172 2150 1178 2168 1198 2168 1210 2185 1210 2197 1206 2203 1221 2200 1233 2185 1239 2172 1236 2162 1227 2140 1236 2115 1256 2110 1272 2080 1275 2073 1292 2080 1366 2080 1433 2085 1443 2075 1485 1994 1509 1988 1530 1965 1537 1948 1552 1943 1568 1834 1573 1826 1622 1776 1604 1757 1613 1745 1611 1708 1619 1698 1651 1655 1644 1572 1623 1492 1722 1472 1725 1467 1741 1460 1777 1480 1782 1477 1804 1462 1805 1475 1830 1483 1859 1465 1884 1425 1901 1395 1936 1367 1956 1326 1967 1322 1984 1312 1979 1303 1987 1285 1982 1271 1996 1264 1955 1262 1905 1250 1901 1240 1913 1215 1925 1193 1931 1174 1951 1104 1948 1095 1962 1077 1975 1070 2008 1064 2025 1048 2014 957 2011 943 2019 931 2106 912 2104 897 2113 885 2105 862 2090 790 2073 740 2074 720 2063 704 2061 698 2040 676 2015 630 2016 622 2005 631 1970 624 1945 632 1927 644 1912 643 1898 612 1890 608 1881 587 1881 574 1900 560 1918 545 1938 530 1942 524 1959 512 1955 514 1943 502 1938 496 1921 520 1895 517 1870 500 1856 495 1845 475 1846 415 1872 385 1835 376 1818 355 1802 337 1833 297 1843 273 1858 235 1863 210 1860 208 1835 200 1818 170 1813 165 1802 184 1782 185 1768 207 1768 205 1750 188 1743 185 1730 165 1713 145 1698 128 1713 118 1733 114 1752 60 1675 60 1650 88 1640 92 1620 130 1560 140 1525 155 1525 162 1516 185 1527 198 1520 215 1478 215 1460 221 1428 185 1431 144 1405 153 1390 165 1354 135 1347 142 1338 135 1330 140 1290 136 1230 151 1212 153 1180 144 1128 138 1116 110 1102 108 1097 122 1085 122 1078 131 1045 143 1030 140 1018 149 1010 146 975 149 960 127 960 127 952 140 932 155 915 172 872 167 855 170 830 175 817 164 800 168 787 188 775 190 763 203 740 197 718 189 706 203 696 264 716 271 700 269 675 274 660 266 640 276 605 275 520 313 521 355 477 362 478 377 500 433 518 439 505 439 483 466 440 510 456 550 436 562 425 576 390 597 352 610 346 684 349 687 320 710 268 724 215 740 172 777 173 773 163 779 115 802 79z"/>
        <g class="stations">
          <path id="st" d="M324 699h0M408 730h0M453 753h0M492 774h0M543 798h0M594 828h0M681 918h0M645 963h0M651 1011h0M699 1026h0M741 1038h0M792 1077h0M570 1206h0M624 1185h0M690 1176h0M756 1176h0M807 1176h0M882 1185h0M930 1155h0M969 1140h0M1029 1176h0M1098 1194h0M1161 1170h0M1242 1158h0M1281 1107h0M1331 1077h0M546 1266h0M567 1332h0M522 1368h0M489 1401h0M453 1434h0M405 1443h0M312 1515h0M243 1578h0M168 1623h0M816 1233h0M816 1275h0M810 1344h0M852 1368h0M852 1425h0M855 1482h0M855 1536h0M810 1575h0M807 1626h0M786 1704h0"/>
          <use href="#st" class="core"/>
        </g>
      </svg>
    </section>

    <section class="panel toolbox">
      <div class="head"><h2>Processing Toolbox</h2><svg class="x"><use href="#close"/></svg></div>
      <div class="tools">
        <span><svg><use href="#models"/></svg></span><span><svg><use href="#python"/></svg></span><span><svg><use href="#hist"/></svg></span><span><svg><use href="#log"/></svg></span><i class="sep"></i><span class="slim"><svg><use href="#inplace"/></svg></span><i class="sep wide"></i><span><svg><use href="#bigwrench"/></svg></span>
      </div>
      <div class="find"><svg class="glass"><use href="#search"/></svg><span class="query">buffer</span><svg class="clear" viewBox="0 0 26 20"><path d="M0 10L7 0h19v20H7z" fill="#8f8f8f"/><path d="M10 4l11 12M21 4L10 16" stroke="#fff" stroke-width="2.200"/></svg></div>
      <div class="view">
        <ul class="tree algs">
          <li><i class="openarrow"></i><svg><use href="#qgis"/></svg>Vector geometry</li>
          <li class="l1 chosen"><svg><use href="#bufferic"/></svg>Buffer</li>
          <li class="l1"><svg><use href="#gear"/></svg>Create wedge buffers</li>
          <li class="l1"><svg><use href="#gear"/></svg>Multi-ring buffer (constant distan...</li>
          <li class="l1"><svg><use href="#gear"/></svg>Rectangles,ovals,diamonds</li>
          <li class="l1"><svg><use href="#gear"/></svg>Single sided buffer</li>
          <li class="l1"><svg><use href="#gear"/></svg>Tapered buffers</li>
          <li class="l1"><svg><use href="#gear"/></svg>Variable width buffer (by M value)</li>
          <li><i class="openarrow"></i><svg><use href="#qgis"/></svg>Vector selection</li>
          <li class="l1"><svg><use href="#gear"/></svg>Extract within distance</li>
          <li class="l1"><svg><use href="#gear"/></svg>Select within distance</li>
          <li><i class="openarrow"></i><svg><use href="#gdal"/></svg>GDAL</li>
          <li class="group"><i class="openarrow"></i>Vector geoprocessing</li>
          <li class="l2"><svg><use href="#gdal"/></svg>Buffer vectors</li>
          <li class="l2"><svg><use href="#gdal"/></svg>One side buffer</li>
          <li><i class="openarrow"></i><svg><use href="#grass"/></svg>GRASS</li>
          <li class="group"><i class="openarrow"></i>Raster (r.*)</li>
          <li class="l2"><svg><use href="#grass"/></svg>r.buffer</li>
          <li class="l2"><svg><use href="#grass"/></svg>r.buffer.lowmem</li>
          <li class="group"><i class="openarrow"></i>Vector (v.*)</li>
          <li class="l2"><svg><use href="#grass"/></svg>v.buffer</li>
          <li><i class="openarrow"></i><svg><use href="#saga"/></svg>SAGA</li>
          <li class="group"><i class="openarrow"></i>Raster tools</li>
          <li class="l2"><svg><use href="#saga"/></svg>Raster buffer</li>
          <li class="l2"><svg><use href="#saga"/></svg>Raster proximity buffer</li>
          <li class="l2"><svg><use href="#saga"/></svg>Threshold raster buffer</li>
          <li class="group"><i class="openarrow"></i>Vector general</li>
          <li class="l2"><svg><use href="#saga"/></svg>Fixed distance buffer</li>
          <li class="l2"><svg><use href="#saga"/></svg>Variable distance buffer</li>
        </ul>
        <div class="scroll"><div class="thumb long"></div></div>
        <div class="mark algmark"></div>
      </div>
    </section>
  </main>

  <footer class="status">
    <div class="locate"><svg class="glass"><use href="#search"/></svg>Type to locate (<span class="cmd">⌘</span>K)</div>
    <span class="cut rdi">rdin</span>
    <div class="coord">77.7323,13.1299</div>
    <svg class="mouse"><use href="#mouse"/></svg>
    <span class="cut ca">ca</span>
    <div class="combo scale">1:486842<i class="drop"></i></div>
    <svg class="lock"><use href="#lock"/></svg>
    <span class="cut en">n</span>
    <div class="combo mag">100%<span class="spin"><i class="up"></i><i class="drop"></i></span></div>
    <span class="cut ra">a</span>
    <div class="combo rot">0.0 °<span class="spin"><i class="up"></i><i class="drop"></i></span></div>
    <svg class="check"><use href="#tick"/></svg>
    <span class="render">Render</span>
    <svg class="crs"><use href="#crs"/></svg>
    <span class="epsg">EPSG:4326</span>
    <svg class="bubble"><use href="#bubble"/></svg>
  </footer>
</div>
</body>
</html>
```
FILE: styles.css
```css
* { box-sizing: border-box; }
body { margin: 0; background: #fff; font-family: Inter, "Liberation Sans", sans-serif; font-size: 25px; color: #0d0d0d; }
.defs { position: absolute; }
h1, h2, ul { margin: 0; padding: 0; list-style: none; }
i { font-style: normal; display: block; flex: none; }
svg { display: block; flex: none; overflow: visible; }
symbol { overflow: visible; }

.window { --hole: #717171; width: 1942px; height: 1434px; display: flex; flex-direction: column; overflow: hidden; border-radius: 19px; background: #717171; }

.titlebar { height: 58px; flex: none; display: flex; align-items: center; background: #363231; border-top: 2px solid #5f5c5b; border-bottom: 2px solid #0a0a0a; }
.lights { display: flex; gap: 16px; width: 200px; padding-left: 16px; margin-top: -2px; }
.lights i { width: 24px; height: 24px; border-radius: 50%; }
.red { background: #ff5f57; }
.amber { background: #febc2e; }
.green { background: #28c840; }
.titlebar h1 { flex: 1; padding-right: 200px; margin-top: -5px; text-align: center; font-size: 25px; font-weight: 700; color: #b9b6b4; letter-spacing: .4px; }

.toolbar { display: flex; align-items: center; flex: none; }
.first { height: 72px; padding-top: 1px; }
.second { height: 83px; padding-bottom: 1px; }
.tb { width: 68px; height: 66px; flex: none; display: flex; align-items: center; justify-content: center; }
.tb svg { width: 48px; height: 48px; }
.on { border: 2px solid #f4f4f4; border-radius: 6px; width: 66px; margin: 0 1px; }
.dim svg { opacity: .32; }
.faint svg { opacity: .22; }
.grip { height: 19px; border-right: 3px solid #a6a6a6; border-radius: 1px; }
.w10 { width: 10px; }
.w14 { width: 14px; }
.w16 { width: 16px; }
.w48 { width: 48px; }
.sep { width: 9px; height: 14px; flex: none; background: linear-gradient(#4c4c4c, #4c4c4c) center / 2px 100% no-repeat; }
.wide { width: 13px; }
.drop { width: 22px; height: 8px; background: #b9b9b9; clip-path: polygon(7px 0, 15px 0, 11px 8px); }
.gap3 { margin-right: 3px; }
.gap2 { margin-right: 2px; }
.more { width: 32px; text-align: center; font-size: 20px; letter-spacing: -1px; line-height: 20px; color: #333; margin-top: -2px; }
.last { margin-left: auto; }

.work { height: 1160px; flex: none; display: grid; grid-template-columns: 568px 752px 596px; column-gap: 13px; }
.left { display: flex; flex-direction: column; gap: 14px; height: 1160px; }
.panel { display: flex; flex-direction: column; min-height: 0; }
.browser { height: 400px; flex: none; }
.layers { flex: 1; }
.head { height: 34px; flex: none; display: flex; align-items: center; }
.head h2 { width: 518px; text-align: center; font-size: 22px; font-weight: 400; letter-spacing: .1px; }
.toolbox .head h2 { width: 546px; }
.head .x { width: 22px; height: 22px; margin: -4px 0 0 23px; }
.tools { height: 63px; flex: none; display: flex; align-items: center; padding-left: 4px; }
.tools span { width: 52px; display: flex; justify-content: center; }
.tools .slim { width: 48px; }
.tools svg { width: 29px; height: 29px; }
.tools .drop { width: 25px; }
.view { position: relative; flex: 1; min-height: 0; display: flex; gap: 4px; padding: 2px; background: #b2b2b2; border: 2px solid #343434; border-radius: 4px; --hole: #b2b2b2; }

.tree { flex: 1; min-width: 0; overflow: hidden; letter-spacing: .32px; }
.tree li { height: 36px; display: flex; align-items: center; white-space: nowrap; padding-left: 14px; }
.tree svg { width: 30px; height: 30px; margin-right: 13px; }
.files li { padding-left: 10px; }
.files .shut { margin-right: 17px; }
.files .leaf { padding-left: 39px; }
.shut { width: 12px; height: 12px; background: #6c6c6c; clip-path: polygon(1px 1px, 11px 6px, 1px 11px); }
.openarrow { width: 12px; height: 11px; background: #6c6c6c; clip-path: polygon(1px 0, 11px 0, 6px 11px); margin-right: 21px; }
.tree .l1 { padding-left: 87px; }
.tree .l2 { padding-left: 127px; }
.tree .group { height: 32px; padding-left: 54px; }
.group .openarrow { margin-right: 20px; }
.chosen { background: #f0f0f0; }
.scroll { width: 16px; background: #343434; border-radius: 4px; padding: 2px; }
.thumb { background: #717171; border-radius: 3px; }
.short { height: 126px; }
.long { height: 906px; }

.list { flex-direction: column; gap: 0; padding: 1px 2px; }
.layer { height: 44px; flex: none; display: flex; align-items: center; padding: 2px 0 0 48px; font-weight: 700; font-size: 26px; letter-spacing: .42px; }
.check { width: 26px; height: 26px; }
.sym { width: 32px; height: 32px; margin: 0 12px 0 14px; display: flex; align-items: center; justify-content: center; }
.fill { background: #fdbe6f; border: 1px solid #8d7350; }
.dot { width: 7px; height: 7px; border-radius: 50%; }
.pink { background: #f0a0b0; border: 1px solid #777; }
.violet { background: #8a6db5; border: 1px solid #444; }
.chosen span { text-decoration: underline; text-decoration-thickness: 3px; text-underline-offset: 3px; text-decoration-skip-ink: none; }
.mark { position: absolute; border: 6px solid #ff2e70; border-radius: 3px; }
.layermark { left: 37px; top: -10px; width: 481px; height: 60px; }
.algmark { left: 73px; top: 23px; width: 163px; height: 63px; }

.map { background: #fff; border: 1px solid #4a4a4a; }
.map svg { width: 750px; height: 1158px; }
.district { fill: #fdbe6f; stroke: #232323; stroke-width: 3.6; stroke-linejoin: round; }
.stations { fill: none; stroke: #35303a; stroke-width: 39; stroke-linecap: round; }
.core { stroke: #f5a0b0; stroke-width: 25; }

.find { height: 48px; flex: none; display: flex; align-items: center; background: #b2b2b2; border: 2px solid #c6c6c6; border-radius: 6px; padding: 0 16px 0 15px; }
.glass { width: 26px; height: 30px; }
.query { margin-left: 19px; border-right: 2px solid #333; height: 30px; line-height: 30px; }
.clear { width: 26px; height: 20px; margin-left: auto; }

.status { height: 61px; flex: none; display: flex; align-items: center; font-size: 23px; padding: 1px 0 0 9px; }
.locate { width: 427px; height: 48px; flex: none; display: flex; align-items: center; background: #b2b2b2; border: 2px solid #343434; border-radius: 5px; padding-left: 14px; color: #5f5f5f; font-size: 25px; letter-spacing: .3px; }
.locate .glass { margin-right: 20px; }
.cmd { font-family: "DejaVu Sans", sans-serif; font-size: 23px; }
.cut { overflow: hidden; flex: none; display: flex; white-space: nowrap; }
.rdi { width: 29px; margin-left: 58px; font-size: 22px; }
.coord { width: 207px; height: 44px; margin-left: 7px; flex: none; display: flex; align-items: center; justify-content: center; background: #b2b2b2; border: 2px solid #343434; border-radius: 5px; font-size: 24px; letter-spacing: .1px; }
.mouse { width: 30px; height: 34px; margin-left: 9px; }
.ca { width: 10px; margin-left: 30px; justify-content: flex-end; font-size: 19px; }
.combo { height: 48px; flex: none; display: flex; align-items: center; justify-content: space-between; color: #b6b6b6; background: linear-gradient(#525252, #393939); border: 2px solid #242424; border-radius: 5px; padding: 0 3px 0 10px; }
.scale { width: 203px; margin-left: 4px; }
.lock { width: 24px; height: 28px; margin: 0 22px 0 24px; }
.en { width: 13px; font-size: 19px; }
.mag { width: 181px; margin-left: 3px; padding-left: 8px; }
.ra { width: 10px; margin-left: 18px; font-size: 19px; }
.rot { width: 186px; margin-left: 17px; padding-left: 9px; }
.spin { display: flex; flex-direction: column; gap: 14px; }
.up { width: 22px; height: 8px; background: #b9b9b9; clip-path: polygon(7px 8px, 15px 8px, 11px 0); }
.status .check { margin: 0 14px 0 14px; }
.render { width: 101px; font-size: 22px; }
.crs { width: 30px; height: 30px; margin-right: 5px; }
.epsg { width: 166px; font-size: 22px; }
.bubble { width: 34px; height: 34px; }
```
